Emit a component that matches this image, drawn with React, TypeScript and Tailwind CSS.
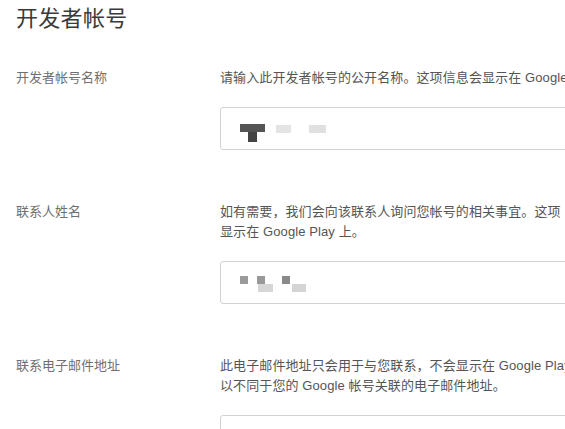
const Field = (props: {
  label: string;
  lines: string[];
  children?: React.ReactNode;
}) => {
  const { label, lines, children } = props;
  return (
    <div className="flex flex-row">
      <div className="w-[204px] shrink-0 text-[13px] leading-[20px] text-[#6f6f6f]">{label}</div>
      <div className="w-[420px] shrink-0">
        {lines.map((l) => (
          <p key={l} className="whitespace-nowrap text-[13px] leading-[20px] tracking-[0.1px] text-[#555]">
            {l}
          </p>
        ))}
        <div className="mt-[19px] h-[43px] w-[400px] rounded-[3px] border border-[#d2d2d2] bg-white">
          {children}
        </div>
      </div>
    </div>
  );
};

export default function App() {
  return (
    <div
      className="h-[429px] w-[565px] overflow-hidden bg-white px-4"
      style={{ fontFamily: '"Liberation Sans", "Noto Sans CJK SC", sans-serif' }}
    >
      <h1 className="pt-[4px] text-[22px] leading-[30px] tracking-[0.3px] text-[#3a3a3a]">开发者帐号</h1>

      <div className="mt-[34px] flex flex-col gap-[52px]">
        <Field label="开发者帐号名称" lines={["请输入此开发者帐号的公开名称。这项信息会显示在 Google Play 上。"]}>
          {/* redacted name */}
          <div className="flex flex-row items-start pl-[19px] pt-[16px] blur-[0.6px]">
            <div className="flex w-[25px] flex-col">
              <div className="h-[8px] w-[25px] bg-[#555]" />
              <div className="ml-[8px] h-[10px] w-[9px] bg-[#444]" />
            </div>
            <div className="ml-[11px] mt-[1px] h-[8px] w-[15px] bg-[#e4e4e4]" />
            <div className="ml-[18px] mt-[1px] h-[8px] w-[17px] bg-[#e0e0e0]" />
          </div>
        </Field>

        <Field label="联系人姓名" lines={["如有需要，我们会向该联系人询问您帐号的相关事宜。这项", "显示在 Google Play 上。"]}>
          <div className="flex flex-row items-start pl-[19px] pt-[14px] blur-[0.6px]">
            <div className="h-[8px] w-[8px] bg-[#9a9a9a]" />
            <div className="ml-[9px] flex flex-col">
              <div className="h-[8px] w-[8px] bg-[#999]" />
              <div className="ml-[1px] h-[8px] w-[15px] bg-[#d6d6d6]" />
            </div>
            <div className="ml-[9px] flex flex-col">
              <div className="h-[8px] w-[8px] bg-[#8a8a8a]" />
              <div className="ml-[10px] h-[8px] w-[14px] bg-[#d4d4d4]" />
            </div>
          </div>
        </Field>

        <Field
          label="联系电子邮件地址"
          lines={["此电子邮件地址只会用于与您联系，不会显示在 Google Play 上。它可", "以不同于您的 Google 帐号关联的电子邮件地址。"]}
        />
      </div>
    </div>
  );
}
